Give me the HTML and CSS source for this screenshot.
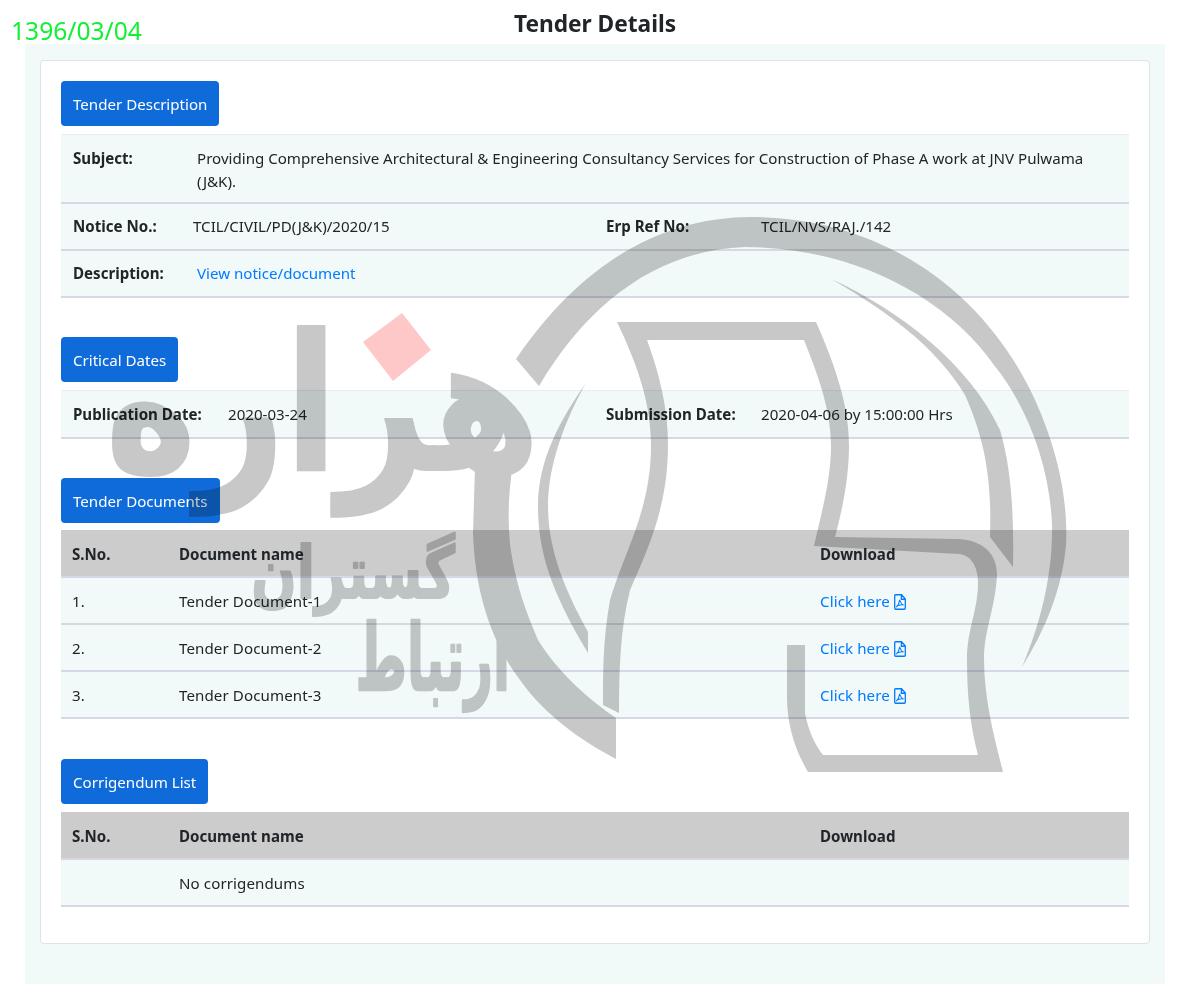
FILE: index.html
```html
<!DOCTYPE html>
<html lang="en">
<head>
  <meta charset="UTF-8" />
  <title>Tender Details</title>
  <link rel="stylesheet" href="styles.css">
</head>
<body>

  <div class="stamp">1396/03/04</div>
  <h1 class="page-title">Tender Details</h1>

  <div class="wrapper">
    <div class="card">

      <!-- Tender Description -->
      <div class="tab">Tender Description</div>
      <div class="info">
        <div class="row row-subject">
          <b class="label-subject">Subject:</b>
          <span class="fill">Providing Comprehensive Architectural &amp; Engineering Consultancy Services for Construction of Phase A work at JNV Pulwama (J&amp;K).</span>
        </div>
        <div class="row">
          <div class="half">
            <b class="label-notice">Notice No.:</b>
            <span>TCIL/CIVIL/PD(J&amp;K)/2020/15</span>
          </div>
          <div class="half">
            <b class="label-erp">Erp Ref No:</b>
            <span>TCIL/NVS/RAJ./142</span>
          </div>
        </div>
        <div class="row">
          <b class="label-subject">Description:</b>
          <a href="#">View notice/document</a>
        </div>
      </div>

      <!-- Critical Dates -->
      <div class="tab">Critical Dates</div>
      <div class="info info-dates">
        <div class="row">
          <div class="half">
            <b class="label-pub">Publication Date:</b>
            <span>2020-03-24</span>
          </div>
          <div class="half">
            <b class="label-erp">Submission Date:</b>
            <span>2020-04-06 by 15:00:00 Hrs</span>
          </div>
        </div>
      </div>

      <!-- Tender Documents -->
      <div class="tab tab-tight">Tender Documents</div>
      <table class="docs">
        <thead>
          <tr><th class="col-no">S.No.</th><th class="col-name">Document name</th><th>Download</th></tr>
        </thead>
        <tbody>
          <tr>
            <td>1.</td><td>Tender Document-1</td>
            <td><a href="#">Click here <svg class="pdf" viewBox="0 0 12 14" preserveAspectRatio="none"><use href="#pdf-icon"/></svg></a></td>
          </tr>
          <tr>
            <td>2.</td><td>Tender Document-2</td>
            <td><a href="#">Click here <svg class="pdf" viewBox="0 0 12 14" preserveAspectRatio="none"><use href="#pdf-icon"/></svg></a></td>
          </tr>
          <tr>
            <td>3.</td><td>Tender Document-3</td>
            <td><a href="#">Click here <svg class="pdf" viewBox="0 0 12 14" preserveAspectRatio="none"><use href="#pdf-icon"/></svg></a></td>
          </tr>
        </tbody>
      </table>

      <!-- Corrigendum List -->
      <div class="tab">Corrigendum List</div>
      <table class="docs">
        <thead>
          <tr><th class="col-no">S.No.</th><th class="col-name">Document name</th><th>Download</th></tr>
        </thead>
        <tbody>
          <tr><td></td><td>No corrigendums</td><td></td></tr>
        </tbody>
      </table>

    </div>
  </div>

  <!-- pdf icon used by the download links -->
  <svg class="defs" width="0" height="0">
    <symbol id="pdf-icon" viewBox="0 0 12 14">
      <path d="M1.5 .7H7.6L11.3 4.4V12.3A1 1 0 0 1 10.3 13.3H1.7A1 1 0 0 1 .7 12.3V1.5A.8 .8 0 0 1 1.5 .7ZM7.4 .9V4.6H11.1" fill="none" stroke="currentColor" stroke-width="1.3"/>
      <path d="M5.7 5.2C5.2 7.6 4.2 10 2.7 11.2C2.2 10.4 5.5 9.2 9.2 9.4C9.7 10.2 6.6 8.6 5.7 5.2Z" fill="none" stroke="currentColor" stroke-width="1"/>
    </symbol>
  </svg>

  <!-- watermark over the page -->
  <svg class="watermark" width="1185" height="990" viewBox="0 0 1185 990">
    <!-- the grey dot of the word is left out, the pink one takes its place -->
    <clipPath id="no-dot">
      <path clip-rule="evenodd" d="M0 0H1185V990H0ZM380 372H420V410H380Z"/>
    </clipPath>
    <g class="wm-shape">
      <g clip-path="url(#no-dot)">
        <text class="wm-big" transform="translate(540 470) scale(.81 1)">هزاره</text>
      </g>
      <text class="wm-mid" transform="translate(455 598) scale(.74 1)">گستران</text>
      <text class="wm-small" transform="translate(510 690) scale(.62 1.15)">ارتباط</text>

      <!-- outer ring -->
      <path d="M516 359C580 265 660 217 752 217C880 217 985 290 1035 400C1060 455 1068 505 1066 545C1062 590 1045 630 1022 667C1040 625 1053 575 1052 525C1050 470 1030 410 994 365C945 295 850 247 745 247C660 250 590 300 539 386Z"/>
      <!-- inner sliver on the right -->
      <path d="M831 279C900 310 970 365 1000 430C1012 470 1014 520 1013 567L990 537C992 480 985 440 965 395C935 345 885 310 831 279Z"/>
      <!-- left arc -->
      <path d="M475 467L512 470C508 500 508 520 510 544C516 590 530 620 538 640C560 675 590 700 616 718V759C580 740 545 715 520 680C490 640 475 590 473 533Z"/>
      <!-- inner crescent -->
      <path d="M586 383C560 420 538 460 538 506C538 550 550 590 588 653V632C565 590 548 550 548 506C548 465 565 420 586 383Z"/>
      <!-- scroll -->
      <path d="M617 322H816C835 365 849 405 849 445C849 480 842 510 835 537L959 539C985 541 997 555 997 575C995 610 984 630 984 659C984 700 995 740 1003 772H808C795 750 787 725 787 697V645H805V713C808 730 815 745 823 755L978 755C970 725 967 695 967 659C967 630 978 610 978 583C978 565 970 555 959 554L814 546C822 510 831 480 831 445C831 410 818 375 804 340H647C660 375 668 410 668 445C668 510 645 555 630 590C620 630 619 670 619 713L603 705C603 670 603 640 610 600C625 550 651 510 651 445C651 400 635 360 617 322Z"/>
    </g>
    <polygon class="wm-dot" points="363,342 402,313 431,350 393,381"/>
  </svg>

</body>
</html>
```

FILE: styles.css
```css
body {
  margin: 0;
  font-family: "Noto Sans", "Open Sans", sans-serif;
  font-size: 15.1px;
  line-height: 23px;
  color: #212529;
  background: white;
}

a {
  color: #007bff;
  text-decoration: none;
}

/* Title and date */
.stamp {
  position: absolute;
  left: 11px;
  top: 14px;
  font-size: 24.6px;
  line-height: 34px;
  color: #14f035;
}

.page-title {
  margin: 0;
  padding-left: 5px;
  height: 44px;
  font-size: 22.7px;
  line-height: 47px;
  font-weight: 700;
  text-align: center;
}

/* Page panels */
.wrapper {
  margin: 0 20px 0 25px;
  padding: 16px 15px 40px;
  background: #f2f9f9;
}

.card {
  padding: 20px 20px 0;
  height: 862px;
  background: white;
  border: 1px solid #dfe3e6;
  border-radius: 4px;
}

.tab {
  display: inline-block;
  padding: 12px 12px 10px;
  background: #0f6bd9;
  color: white;
  border-radius: 4px;
  margin-bottom: 8px;
}

.tab-tight {
  margin-bottom: 7px;
}

/* Description rows */
.info {
  margin-bottom: 39px;
  border-top: 1px solid #e6eeee;
}

.info-dates .row {
  padding-top: 12px;
}

.row {
  display: flex;
  padding: 11px 12px;
  background: #f2f9f9;
  border-bottom: 2px solid #d6d8e6;
}

.row-subject {
  padding: 12px 12px 10px;
  line-height: 22.5px;
}

.half {
  width: 533px;
  flex: none;
  display: flex;
}

.half + .half {
  width: 511px;
}

.fill {
  flex: 1;
}

.label-subject { width: 124px; flex: none; }
.label-notice { width: 120px; flex: none; }
.label-erp { width: 155px; flex: none; }
.label-pub { width: 155px; flex: none; }

/* Document tables */
.docs {
  width: 100%;
  border-collapse: collapse;
  margin-bottom: 40px;
}

.docs th {
  padding: 13px 11px 10px;
  background: #ccc;
  text-align: left;
  border-bottom: 2px solid #d6d8e6;
}

.docs td {
  padding: 12px 11px 10px;
  background: #f2f9f9;
  border-bottom: 2px solid #d6d8e6;
  letter-spacing: .1px;
}

.col-no { width: 85px; }
.col-name { width: 619px; }

.pdf {
  width: 12px;
  height: 16px;
  vertical-align: -3px;
}

.defs {
  position: absolute;
}

/* Watermark */
.watermark {
  position: absolute;
  left: 0;
  top: 0;
  pointer-events: none;
  mix-blend-mode: multiply;
}

.wm-shape {
  fill: #c8c8c8;
}

.wm-shape text {
  font-family: "DejaVu Sans", sans-serif;
  font-weight: 700;
  direction: rtl;
  stroke: #c8c8c8;
  stroke-width: 2px;
  stroke-linejoin: round;
}

.wm-big { font-size: 190px; }
.wm-mid { font-size: 72px; }
.wm-small { font-size: 80px; }

.wm-dot {
  fill: #ffc8c8;
}
```
